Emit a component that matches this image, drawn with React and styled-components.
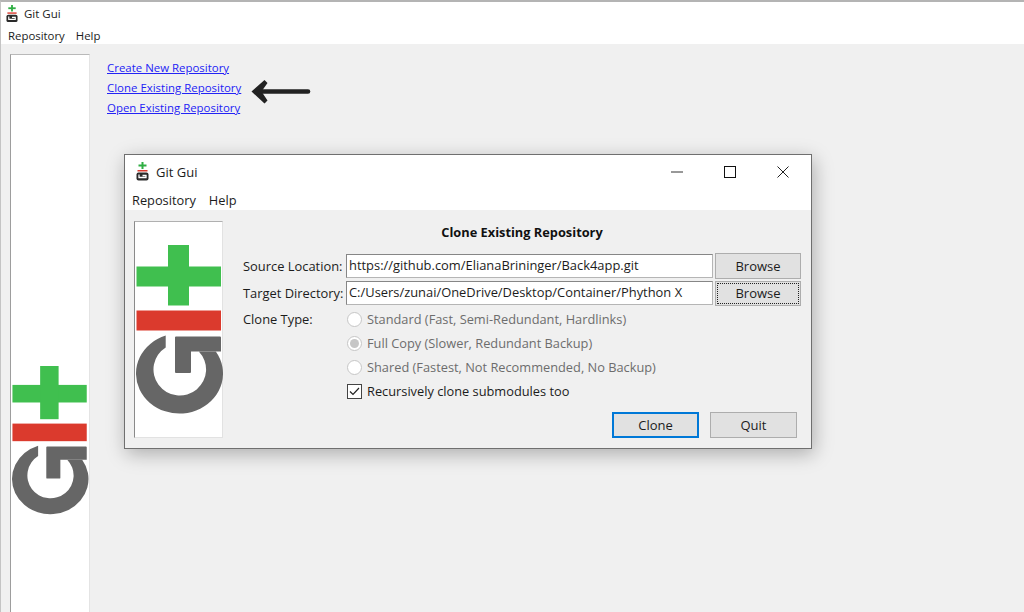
import styled, { createGlobalStyle } from "styled-components";

const GlobalStyle = createGlobalStyle`
  html, body {
    margin: 0;
    padding: 0;
    background: #f0f0f0;
  }
  * { box-sizing: border-box; }
`;

const Page = styled.div`
  position: relative;
  width: 1024px;
  height: 612px;
  overflow: hidden;
  display: flex;
  flex-direction: column;
  font-family: "Open Sans", "Noto Sans", sans-serif;
  color: #1c1c1c;
  background: #f0f0f0;
  border-top: 2px solid #b4b4b4;
  border-left: 1px solid #c4c4c4;
`;
const MainTitle = styled.div`
  display: flex;
  align-items: center;
  gap: 6px;
  height: 23px;
  padding-left: 5px;
  background: #fff;
  font-size: 11.5px;
`;
const MainMenu = styled.div`
  display: flex;
  gap: 11px;
  height: 19px;
  padding: 2px 0 0 7px;
  background: #fff;
  font-size: 11.4px;
  line-height: 18px;
`;
const MainBody = styled.div`
  flex: 1;
  display: flex;
  gap: 17px;
  padding: 10px 0 0 9px;
  min-height: 0;
`;
const SidePanel = styled.div`
  width: 80px;
  display: flex;
  flex-direction: column;
  justify-content: flex-end;
  padding: 0 0 97px 1px;
  background: #fff;
  border-top: 1px solid #b9b9b9;
  border-left: 1px solid #9d9d9d;
  border-right: 1px solid #e4e4e4;
`;
const LinkList = styled.div`
  display: flex;
  flex-direction: column;
  gap: 3px;
  padding-top: 5px;
`;
const RepoLink = styled.a`
  height: 17px;
  font-size: 11.45px;
  line-height: 17px;
  color: #2323f5;
  text-decoration: underline;
`;
const Arrow = styled.svg`
  position: absolute;
  left: 249px;
  top: 76px;
`;
const Dialog = styled.div`
  position: absolute;
  left: 123px;
  top: 152px;
  width: 688px;
  height: 295px;
  display: flex;
  flex-direction: column;
  background: #f0f0f0;
  border: 1px solid #6f6f6f;
  box-shadow: 2px 5px 18px rgba(0, 0, 0, 0.28);
`;
const DialogTitle = styled.div`
  display: flex;
  align-items: center;
  height: 30px;
  padding: 3px 1.5px 0 11px;
  background: #fff;
  font-size: 13px;
`;
const TitleText = styled.span`
  margin-left: 7px;
  flex: 1;
`;
const WinButton = styled.div`
  width: 53px;
  height: 27px;
  display: flex;
  align-items: center;
  justify-content: center;
`;
const DialogMenu = styled.div`
  display: flex;
  gap: 13px;
  height: 25px;
  padding: 2px 0 0 7px;
  background: #fff;
  font-size: 12.8px;
  line-height: 26px;
`;
const DialogBody = styled.div`
  flex: 1;
  display: flex;
  padding: 11px 0 0 9px;
`;
const LogoPanel = styled.div`
  width: 89px;
  height: 217px;
  padding: 23px 0 0 1px;
  background: #fff;
  border-top: 1px solid #b0b0b0;
  border-left: 1px solid #8a8a8a;
  border-right: 1px solid #e2e2e2;
  border-bottom: 1px solid #e2e2e2;
`;
const Form = styled.div`
  width: 558px;
  margin-left: 20px;
  display: flex;
  flex-direction: column;
`;
const Heading = styled.div`
  height: 22px;
  margin-bottom: 10px;
  text-align: center;
  font-size: 12.8px;
  font-weight: 700;
  line-height: 22px;
  color: #111;
`;
const FieldGrid = styled.div`
  display: grid;
  grid-template-columns: 101px 367px 86px;
  grid-auto-rows: 26px;
  column-gap: 2px;
  row-gap: 1px;
  align-items: center;
`;
const Label = styled.div`
  font-size: 12.9px;
  white-space: nowrap;
`;
const Entry = styled.div`
  height: 24px;
  padding-left: 2px;
  background: #fff;
  border: 1.5px solid;
  border-color: #868686 #b5b5b5 #b5b5b5 #868686;
  font-size: 12.9px;
  line-height: 21px;
  white-space: nowrap;
  overflow: hidden;
`;
const Browse = styled.div`
  height: ${(props) => (props.$focus ? "25px" : "26px")};
  background: #e1e1e1;
  border: 1.5px solid #adadad;
  text-align: center;
  font-size: 13px;
  line-height: ${(props) => (props.$focus ? "23px" : "24px")};
  ${(props) => props.$focus && "outline: 1px dotted #222; outline-offset: -3px;"}
`;
const OptionGrid = styled.div`
  display: grid;
  grid-template-columns: 101px 1fr;
  grid-auto-rows: 24px;
  column-gap: 3px;
  align-items: center;
  margin-top: 1px;
`;
const Option = styled.div`
  grid-column: 2;
  grid-row: ${(props) => props.$row || "auto"};
  display: flex;
  align-items: center;
  gap: 5px;
  font-size: 12.8px;
  white-space: nowrap;
  color: ${(props) => (props.$disabled ? "#6d6d6d" : "#1c1c1c")};
`;
const Radio = styled.span`
  width: 15px;
  height: 15px;
  display: flex;
  align-items: center;
  justify-content: center;
  background: #fff;
  border: 1px solid #c6c6c6;
  border-radius: 50%;
  &::after {
    content: "";
    width: 9px;
    height: 9px;
    border-radius: 50%;
    background: ${(props) => (props.$checked ? "#c6c6c6" : "transparent")};
  }
`;
const Check = styled.span`
  width: 15px;
  height: 15px;
  display: flex;
  align-items: center;
  justify-content: center;
  background: #fff;
  border: 1px solid #444;
`;
const Actions = styled.div`
  display: flex;
  justify-content: flex-end;
  gap: 11px;
  margin-top: 9px;
  padding-right: 4px;
`;
const ActionButton = styled.div`
  width: 87px;
  height: 26px;
  background: #e1e1e1;
  border: ${(props) => (props.$primary ? "2px solid #0078d7" : "1px solid #adadad")};
  text-align: center;
  font-size: 13px;
  line-height: ${(props) => (props.$primary ? "22px" : "24px")};
`;

const Logo = ({ width }) => (
  <svg width={width} viewBox="0 0 87 170" style={{ display: "block" }}>
    <rect x="0.5" y="21.5" width="84.5" height="20" fill="#40bf4f" />
    <rect x="32" y="0" width="21" height="60.5" fill="#40bf4f" />
    <rect x="0.5" y="65.5" width="84.5" height="20" fill="#db3a2d" />
    <path
      d="M29.7 90.6A43.5 40 0 1 0 79.8 106.5L62.8 106.5A26.3 26 0 1 1 29.7 102.5Z"
      fill="#666"
    />
    <path
      d="M40 91.5H84a1 1 0 0 1 1 1V106.5H55V127a1 1 0 0 1-1 1H40a1 1 0 0 1-1-1V92.5a1 1 0 0 1 1-1Z"
      fill="#666"
    />
  </svg>
);

const AppIcon = ({ width }) => (
  <svg width={width} viewBox="0 0 13 19" style={{ display: "block" }}>
    <rect x="2.5" y="2.5" width="8" height="2" fill="#2fae43" />
    <rect x="5.5" y="0" width="2" height="7" fill="#2fae43" />
    <rect x="1.5" y="8" width="10" height="1.5" fill="#d8392c" />
    <rect x="0.5" y="10.5" width="12" height="8" rx="2" fill="#2a2a2a" />
    <path d="M3 12.5V15.5H10V13.5H6.5" fill="none" stroke="#fff" strokeWidth="1.3" />
  </svg>
);

const App = () => {
  return (
    <Page>
      <GlobalStyle />
      <MainTitle>
        <AppIcon width={12} />
        <span>Git Gui</span>
      </MainTitle>
      <MainMenu>
        <span>Repository</span>
        <span>Help</span>
      </MainMenu>
      <MainBody>
        <SidePanel>
          <Logo width={76.5} />
        </SidePanel>
        <LinkList>
          <RepoLink>Create New Repository</RepoLink>
          <RepoLink>Clone Existing Repository</RepoLink>
          <RepoLink>Open Existing Repository</RepoLink>
        </LinkList>
      </MainBody>

      <Arrow width="64" height="28" viewBox="0 0 64 28">
        <path d="M1.5 13.5L14.5 2L17.5 5L11.5 13.5L17.5 22.5L14.5 25.5Z" fill="#222" />
        <path d="M8 13.5H58" fill="none" stroke="#222" strokeWidth="4.6" strokeLinecap="round" />
      </Arrow>

      <Dialog>
        <DialogTitle>
          <AppIcon width={13} />
          <TitleText>Git Gui</TitleText>
          <WinButton>
            <svg width="12" height="2" viewBox="0 0 12 2">
              <path d="M0 1H12" stroke="#333" strokeWidth="1" />
            </svg>
          </WinButton>
          <WinButton>
            <svg width="12" height="12" viewBox="0 0 12 12">
              <rect x="0.5" y="0.5" width="11" height="11" fill="none" stroke="#111" />
            </svg>
          </WinButton>
          <WinButton>
            <svg width="12" height="12" viewBox="0 0 12 12">
              <path d="M0.5 0.5L11.5 11.5M11.5 0.5L0.5 11.5" stroke="#222" />
            </svg>
          </WinButton>
        </DialogTitle>
        <DialogMenu>
          <span>Repository</span>
          <span>Help</span>
        </DialogMenu>
        <DialogBody>
          <LogoPanel>
            <Logo width={87} />
          </LogoPanel>
          <Form>
            <Heading>Clone Existing Repository</Heading>
            <FieldGrid>
              <Label>Source Location:</Label>
              <Entry>https://github.com/ElianaBrininger/Back4app.git</Entry>
              <Browse>Browse</Browse>
              <Label>Target Directory:</Label>
              <Entry>C:/Users/zunai/OneDrive/Desktop/Container/Phython X</Entry>
              <Browse $focus>Browse</Browse>
            </FieldGrid>
            <OptionGrid>
              <Label>Clone Type:</Label>
              <Option $disabled $row={1}>
                <Radio />
                Standard (Fast, Semi-Redundant, Hardlinks)
              </Option>
              <Option $disabled>
                <Radio $checked />
                Full Copy (Slower, Redundant Backup)
              </Option>
              <Option $disabled>
                <Radio />
                Shared (Fastest, Not Recommended, No Backup)
              </Option>
              <Option>
                <Check>
                  <svg width="11" height="9" viewBox="0 0 11 9">
                    <path d="M1 4.5L4 7.5L10 1" fill="none" stroke="#222" strokeWidth="1.2" />
                  </svg>
                </Check>
                Recursively clone submodules too
              </Option>
            </OptionGrid>
            <Actions>
              <ActionButton $primary>Clone</ActionButton>
              <ActionButton>Quit</ActionButton>
            </Actions>
          </Form>
        </DialogBody>
      </Dialog>
    </Page>
  );
};

export default App;
